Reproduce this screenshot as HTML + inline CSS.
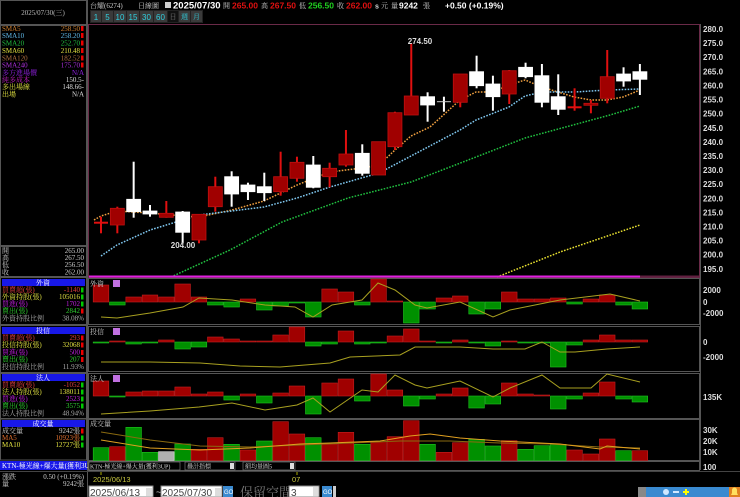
<!DOCTYPE html>
<html><head><meta charset="utf-8">
<style>
html,body{margin:0;padding:0;background:#000;width:740px;height:497px;overflow:hidden}
svg{display:block}
text{font-family:"Liberation Serif","Noto Serif CJK SC",serif;font-size:7px}
.s{font-family:"Liberation Sans","Noto Sans CJK SC",sans-serif}
.ax{font-family:"Liberation Sans",sans-serif;font-size:8px;font-weight:bold;fill:#ddd}
</style></head><body>
<svg id="c" width="740" height="497" viewBox="0 0 740 497" xmlns="http://www.w3.org/2000/svg">
<rect width="740" height="497" fill="#000"/>
<!-- left panel frames -->
<rect x="0.5" y="0.5" width="86" height="24" fill="#000" stroke="#555"/>
<text x="43" y="15" text-anchor="middle" fill="#bbb">2025/07/30(三)</text>
<rect x="0.5" y="25.5" width="86" height="220" fill="#000" stroke="#555"/>
<line x1="87.5" y1="0" x2="87.5" y2="497" stroke="#555"/>
<g>
<text x="2" y="31" fill="#d08030">SMA5</text><text x="80" y="31" text-anchor="end" fill="#d08030">258.50</text>
<text x="2" y="38" fill="#60b8e8">SMA10</text><text x="80" y="38" text-anchor="end" fill="#60b8e8">258.20</text>
<text x="2" y="45.5" fill="#20c040">SMA20</text><text x="80" y="45.5" text-anchor="end" fill="#20c040">252.70</text>
<text x="2" y="53" fill="#e0e040">SMA60</text><text x="80" y="53" text-anchor="end" fill="#e0e040">210.48</text>
<text x="2" y="60.5" fill="#b07040">SMA120</text><text x="80" y="60.5" text-anchor="end" fill="#b07040">182.52</text>
<text x="2" y="67.5" fill="#b030e0">SMA240</text><text x="80" y="67.5" text-anchor="end" fill="#b030e0">175.70</text>
<rect x="81" y="26" width="2.5" height="5" fill="#e00"/><rect x="81" y="33" width="2.5" height="5" fill="#e00"/><rect x="81" y="40.5" width="2.5" height="5" fill="#e00"/><rect x="81" y="48" width="2.5" height="5" fill="#e00"/><rect x="81" y="55.5" width="2.5" height="5" fill="#e00"/><rect x="81" y="62.5" width="2.5" height="5" fill="#e00"/>
<text x="2" y="75" fill="#9020e0">多方進場價</text><text x="84" y="75" text-anchor="end" fill="#9020e0">N/A</text>
<text x="2" y="82" fill="#c020c0">純多成本</text><text x="84" y="82" text-anchor="end" fill="#ddd">150.5-</text>
<text x="2" y="89" fill="#e0e040">多出場線</text><text x="84" y="89" text-anchor="end" fill="#ddd">148.66-</text>
<text x="2" y="96.5" fill="#e0e040">出場</text><text x="84" y="96.5" text-anchor="end" fill="#ddd">N/A</text>
</g>
<rect x="0.5" y="246.5" width="86" height="30" fill="#000" stroke="#555"/>
<text x="2" y="253" fill="#ccc">開</text><text x="84" y="253" text-anchor="end" fill="#ccc">265.00</text>
<text x="2" y="260" fill="#ccc">高</text><text x="84" y="260" text-anchor="end" fill="#ccc">267.50</text>
<text x="2" y="267" fill="#ccc">低</text><text x="84" y="267" text-anchor="end" fill="#ccc">256.50</text>
<text x="2" y="274.5" fill="#ccc">收</text><text x="84" y="274.5" text-anchor="end" fill="#ccc">262.00</text>
<!-- 外資 -->
<rect x="0.5" y="277.5" width="86" height="47" fill="#000" stroke="#555"/>
<rect x="2" y="279" width="83" height="7" fill="#1818e8"/><text x="43" y="285" text-anchor="middle" fill="#fff">外資</text>
<text x="2" y="292" fill="#e04040">買賣超(張)</text><text x="80" y="292" text-anchor="end" fill="#e04040">-1140</text><rect x="81" y="287.5" width="2.5" height="5" fill="#0c0"/>
<text x="2" y="299" fill="#e0e040">外資持股(張)</text><text x="80" y="299" text-anchor="end" fill="#e0e040">105016</text><rect x="81" y="294.5" width="2.5" height="5" fill="#0c0"/>
<text x="2" y="306" fill="#c020e0">買進(張)</text><text x="80" y="306" text-anchor="end" fill="#c020e0">1702</text><rect x="81" y="301.5" width="2.5" height="5" fill="#0c0"/>
<text x="2" y="313" fill="#30d030">賣出(張)</text><text x="80" y="313" text-anchor="end" fill="#30d030">2842</text><rect x="81" y="308.5" width="2.5" height="5" fill="#e00"/>
<text x="2" y="320.5" fill="#aaa">外資持股比例</text><text x="84" y="320.5" text-anchor="end" fill="#aaa">38.08%</text>
<!-- 投信 -->
<rect x="0.5" y="325.5" width="86" height="47" fill="#000" stroke="#555"/>
<rect x="2" y="327" width="83" height="7" fill="#1818e8"/><text x="43" y="333" text-anchor="middle" fill="#fff">投信</text>
<text x="2" y="340" fill="#e04040">買賣超(張)</text><text x="80" y="340" text-anchor="end" fill="#e04040">293</text><rect x="81" y="335.5" width="2.5" height="5" fill="#e00"/>
<text x="2" y="347" fill="#e0e040">投信持股(張)</text><text x="80" y="347" text-anchor="end" fill="#e0e040">32068</text><rect x="81" y="342.5" width="2.5" height="5" fill="#e00"/>
<text x="2" y="354.5" fill="#c020e0">買進(張)</text><text x="80" y="354.5" text-anchor="end" fill="#c020e0">500</text><rect x="81" y="350" width="2.5" height="5" fill="#e00"/>
<text x="2" y="361.5" fill="#30d030">賣出(張)</text><text x="80" y="361.5" text-anchor="end" fill="#30d030">207</text><rect x="81" y="357" width="2.5" height="5" fill="#e00"/>
<text x="2" y="369" fill="#aaa">投信持股比例</text><text x="84" y="369" text-anchor="end" fill="#aaa">11.93%</text>
<!-- 法人 -->
<rect x="0.5" y="373.5" width="86" height="45" fill="#000" stroke="#555"/>
<rect x="2" y="374" width="83" height="7" fill="#1818e8"/><text x="43" y="380" text-anchor="middle" fill="#fff">法人</text>
<text x="2" y="387" fill="#e04040">買賣超(張)</text><text x="80" y="387" text-anchor="end" fill="#e04040">-1052</text><rect x="81" y="382.5" width="2.5" height="5" fill="#0c0"/>
<text x="2" y="394" fill="#e0e040">法人持股(張)</text><text x="80" y="394" text-anchor="end" fill="#e0e040">138011</text><rect x="81" y="389.5" width="2.5" height="5" fill="#0c0"/>
<text x="2" y="401" fill="#c020e0">買進(張)</text><text x="80" y="401" text-anchor="end" fill="#c020e0">2523</text><rect x="81" y="396.5" width="2.5" height="5" fill="#0c0"/>
<text x="2" y="408" fill="#30d030">賣出(張)</text><text x="80" y="408" text-anchor="end" fill="#30d030">3575</text><rect x="81" y="403.5" width="2.5" height="5" fill="#0c0"/>
<text x="2" y="415.5" fill="#aaa">法人持股比例</text><text x="84" y="415.5" text-anchor="end" fill="#aaa">48.94%</text>
<!-- 成交量 -->
<rect x="0.5" y="419" width="86" height="41" fill="#000" stroke="#555"/>
<rect x="2" y="420" width="83" height="7" fill="#1818e8"/><text x="43" y="426" text-anchor="middle" fill="#fff">成交量</text>
<text x="2" y="433" fill="#ccc">成交量</text><text x="80" y="433" text-anchor="end" fill="#ccc">9242張</text><rect x="81" y="428.5" width="2.5" height="5" fill="#e00"/>
<text x="2" y="440" fill="#e07030">MA5</text><text x="80" y="440" text-anchor="end" fill="#e07030">10923張</text><rect x="81" y="435.5" width="2.5" height="5" fill="#0c0"/>
<text x="2" y="447" fill="#e0e040">MA10</text><text x="80" y="447" text-anchor="end" fill="#e0e040">12727張</text><rect x="81" y="442.5" width="2.5" height="5" fill="#0c0"/>
<rect x="0" y="461" width="87" height="9" fill="#1818e8"/><text x="2" y="468" fill="#fff">KTN-極光線+爆大量(獲利3UP)</text>
<text x="2" y="479" fill="#ccc">漲跌</text><text x="84" y="479" text-anchor="end" fill="#ccc">0.50 (+0.19%)</text>
<text x="2" y="486" fill="#ccc">量</text><text x="84" y="486" text-anchor="end" fill="#ccc">9242張</text>

<!-- top bar -->
<text x="90" y="8" fill="#ccc">台耀(6274)</text>
<text x="138" y="8" fill="#ccc">日線圖</text>
<rect x="165" y="2" width="6" height="6" fill="#ccc"/>
<text x="173" y="8.5" class="s" style="font-size:9.5px;font-weight:bold" fill="#fff">2025/07/30</text>
<text x="223" y="8" fill="#ccc">開</text><text x="232" y="8.5" class="s" style="font-size:8.5px;font-weight:bold" fill="#e01010">265.00</text>
<text x="261" y="8" fill="#ccc">高</text><text x="270" y="8.5" class="s" style="font-size:8.5px;font-weight:bold" fill="#e01010">267.50</text>
<text x="299" y="8" fill="#ccc">低</text><text x="308" y="8.5" class="s" style="font-size:8.5px;font-weight:bold" fill="#20d020">256.50</text>
<text x="337" y="8" fill="#ccc">收</text><text x="346" y="8.5" class="s" style="font-size:8.5px;font-weight:bold" fill="#e01010">262.00</text>
<text x="375" y="8.5" class="s" style="font-size:7px;font-weight:bold" fill="#ddd">s</text><text x="381" y="8" fill="#ccc">元</text>
<text x="391" y="8" fill="#ccc">量</text><text x="399" y="8.5" class="s" style="font-size:8.5px;font-weight:bold" fill="#fff">9242</text><text x="423" y="8" fill="#ccc">張</text>
<text x="445" y="8.5" class="s" style="font-size:8.5px;font-weight:bold" fill="#fff">+0.50 (+0.19%)</text>
<!-- buttons -->
<rect x="90" y="10" width="113" height="13" fill="#333"/>
<g class="s" style="font-size:8px" fill="#30d0e0">
<rect x="90.5" y="10.5" width="11" height="12" fill="#3a3a3a" stroke="#222"/><text x="96" y="20" text-anchor="middle" class="s" style="font-size:8px" fill="#30d0e0">1</text>
<rect x="101.5" y="10.5" width="12" height="12" fill="#3a3a3a" stroke="#222"/><text x="107.5" y="20" text-anchor="middle" class="s" style="font-size:8px" fill="#30d0e0">5</text>
<rect x="113.5" y="10.5" width="13" height="12" fill="#3a3a3a" stroke="#222"/><text x="120" y="20" text-anchor="middle" class="s" style="font-size:8px" fill="#30d0e0">10</text>
<rect x="126.5" y="10.5" width="13" height="12" fill="#3a3a3a" stroke="#222"/><text x="133" y="20" text-anchor="middle" class="s" style="font-size:8px" fill="#30d0e0">15</text>
<rect x="139.5" y="10.5" width="14" height="12" fill="#3a3a3a" stroke="#222"/><text x="146.5" y="20" text-anchor="middle" class="s" style="font-size:8px" fill="#30d0e0">30</text>
<rect x="153.5" y="10.5" width="14" height="12" fill="#3a3a3a" stroke="#222"/><text x="160.5" y="20" text-anchor="middle" class="s" style="font-size:8px" fill="#30d0e0">60</text>
<rect x="167.5" y="10.5" width="11" height="12" fill="#111" stroke="#222"/><text x="173" y="19" text-anchor="middle" fill="#777">日</text>
<rect x="178.5" y="10.5" width="12" height="12" fill="#3a3a3a" stroke="#222"/><text x="184.5" y="19" text-anchor="middle" fill="#30d0e0">週</text>
<rect x="190.5" y="10.5" width="12" height="12" fill="#3a3a3a" stroke="#222"/><text x="196.5" y="19" text-anchor="middle" fill="#30d0e0">月</text>
</g>

<!-- main chart frame -->
<rect x="88.5" y="24.5" width="611" height="253" fill="none" stroke="#6a2a48"/>
<line x1="700.5" y1="24" x2="700.5" y2="470" stroke="#555"/>
<g class="ax">
<text x="703" y="32" class="ax">280.0</text><text x="703" y="46" class="ax">275.0</text><text x="703" y="60" class="ax">270.0</text><text x="703" y="74.5" class="ax">265.0</text><text x="703" y="88.5" class="ax">260.0</text><text x="703" y="102.5" class="ax">255.0</text><text x="703" y="116.5" class="ax">250.0</text><text x="703" y="131" class="ax">245.0</text><text x="703" y="145" class="ax">240.0</text><text x="703" y="159" class="ax">235.0</text><text x="703" y="173" class="ax">230.0</text><text x="703" y="187" class="ax">225.0</text><text x="703" y="201.5" class="ax">220.0</text><text x="703" y="215.5" class="ax">215.0</text><text x="703" y="229.5" class="ax">210.0</text><text x="703" y="243.5" class="ax">205.0</text><text x="703" y="257.5" class="ax">200.0</text><text x="703" y="272" class="ax">195.0</text>
<text x="703" y="293" class="ax">2000</text><text x="703" y="305" class="ax">0</text><text x="703" y="316" class="ax">-2000</text>
<text x="703" y="345" class="ax">0</text><text x="703" y="360" class="ax">-2000</text>
<text x="703" y="400" class="ax">135K</text>
<text x="703" y="433" class="ax">30K</text><text x="703" y="444" class="ax">20K</text><text x="703" y="455" class="ax">10K</text>
<text x="703" y="470" class="ax">100</text>
</g>
<g fill="none" stroke-width="1.5" stroke-dasharray="1.6 1.4">
<polyline stroke="#f0a040" points="94,220 101,216 117,211 150,213 183,216 199,217 232,210 264,201 297,185 330,172 362,168 379,165 395,150 411,136 430,127 460,100 476,92 493,92 509,85 525,80 542,87 558,92 574,97 591,100 607,100 623,97 640,90"/>
<polyline stroke="#80c8f0" points="101,256 117,245 150,230 199,215 264,207 297,198 330,187 379,173 411,156 460,130 476,120 509,107 525,96 542,92 575,92 607,90 640,89"/>
<polyline stroke="#20c040" points="171,277 230,250 282,222 348,198 411,182 476,157 525,138 610,115 640,106"/>
<polyline stroke="#e8e030" points="497,277 560,252 640,225"/>
</g>
<line x1="89" y1="276.5" x2="640" y2="276.5" stroke="#e020e0" stroke-width="2"/>
<line x1="640" y1="276.5" x2="699" y2="276.5" stroke="#602040" stroke-width="2"/>
<g id="cand"></g>
<text x="183" y="248" text-anchor="middle" class="s" style="font-size:8px;font-weight:bold" fill="#ddd">204.00</text>
<text x="420" y="44" text-anchor="middle" class="s" style="font-size:8px;font-weight:bold" fill="#ddd">274.50</text>

<!-- sub panels -->
<rect x="88.5" y="278.5" width="611" height="46" fill="none" stroke="#555"/>
<rect x="88.5" y="326.5" width="611" height="45" fill="none" stroke="#555"/>
<rect x="88.5" y="373.5" width="611" height="45" fill="none" stroke="#555"/>
<rect x="88.5" y="419.5" width="611" height="41" fill="none" stroke="#555"/>
<rect x="88.5" y="461.5" width="611" height="9" fill="none" stroke="#555"/>
<g id="bars"></g>
<g fill="none" stroke-width="1">
<polyline stroke="#a8a020" points="101,317 117,318 150,313 183,307 199,298 232,300 265,305 295,307 313,317 332,305 362,300 378,283 395,290 415,305 427,308 460,302 493,317 510,310 560,300 610,294 640,301"/>
<polyline stroke="#a8a020" points="101,362 150,362 200,363 240,366 280,367 330,363 350,357 400,355 415,347 460,347 493,349 525,349 542,342 560,352 575,352 607,349 640,347"/>
<polyline stroke="#a8a020" points="101,414 150,411 199,407 232,403 265,410 297,405 313,398 330,412 362,390 378,392 395,375 415,385 427,388 460,381 493,397 510,388 542,375 560,388 591,388 607,374 640,382"/>
<polyline stroke="#8a6a10" points="101,432 150,440 200,446 250,447 300,445 350,443 400,441 450,441 500,443 550,444 600,447 640,448"/>
<polyline stroke="#e0a020" points="101,440 150,448 200,450 250,448 300,444 330,443 380,441 410,436 430,434 460,438 500,441 560,444 600,449 607,446 640,449"/>
</g>
<g class="s" style="font-size:6px">
<text x="90" y="286" fill="#ccc">外資</text><rect x="113" y="280" width="7" height="7" fill="#c070e0"/>
<text x="90" y="334" fill="#ccc">投信</text><rect x="113" y="328" width="7" height="7" fill="#c070e0"/>
<text x="90" y="381" fill="#ccc">法人</text><rect x="113" y="375" width="7" height="7" fill="#c070e0"/>
<text x="90" y="426" fill="#ccc">成交量</text>
</g>
<!-- bottom row -->
<rect x="89" y="462" width="91" height="8" fill="#000" stroke="#888" stroke-width="0.6"/>
<text x="90" y="468.5" style="font-size:6px" fill="#ddd">KTN-極光線+爆大量(獲利3UP)</text>
<rect x="185" y="462" width="50" height="8" fill="#000" stroke="#888" stroke-width="0.6"/><text x="187" y="468.5" style="font-size:6px" fill="#ddd">疊計指標</text><rect x="230" y="463" width="4" height="6" fill="#ddd"/>
<rect x="243" y="462" width="52" height="8" fill="#000" stroke="#888" stroke-width="0.6"/><text x="245" y="468.5" style="font-size:6px" fill="#ddd">細均量圖5</text><rect x="290" y="463" width="4" height="6" fill="#ddd"/>
<line x1="101" y1="471" x2="101" y2="475" stroke="#aa0"/><line x1="297" y1="471" x2="297" y2="475" stroke="#aa0"/>
<text x="93" y="482" class="s" style="font-size:7.5px" fill="#c8c840">2025/06/13</text>
<text x="292" y="482" class="s" style="font-size:7.5px" fill="#c8c840">07</text>
<rect x="89" y="486" width="64" height="11" fill="#fff" stroke="#888"/><text x="90" y="496" class="s" style="font-size:10px" fill="#444">2025/06/13</text><rect x="146" y="488" width="6" height="8" fill="#ddd"/>
<text x="156" y="495" class="s" style="font-size:9px" fill="#ccc">~</text>
<rect x="161" y="486" width="61" height="11" fill="#fff" stroke="#888"/><text x="162" y="496" class="s" style="font-size:10px" fill="#444">2025/07/30</text><rect x="215" y="488" width="6" height="8" fill="#ddd"/>
<rect x="223" y="486" width="10" height="11" fill="#3a8ad0"/><text x="224" y="494" class="s" style="font-size:6px" fill="#fff">GO</text>
<text x="240" y="497" style="font-size:13px" fill="#777">保留空間</text>
<rect x="289" y="486" width="30" height="11" fill="#fff" stroke="#888"/><text x="291" y="496" class="s" style="font-size:10px" fill="#444">3</text><rect x="313" y="487" width="5" height="9" fill="#ddd"/>
<rect x="322" y="486" width="10" height="11" fill="#3a8ad0"/><text x="323" y="494" class="s" style="font-size:6px" fill="#fff">GO</text>
<rect x="333" y="486" width="3" height="11" fill="#ccc"/>
<line x1="0" y1="471.5" x2="740" y2="471.5" stroke="#444"/>
<!-- toolbar icons -->
<rect x="638" y="487" width="8" height="10" fill="#888"/>
<rect x="646" y="487" width="94" height="10" fill="#3a8ad0"/>
<g fill="#cfe8ff"><circle cx="666" cy="492" r="3"/><rect x="673" y="491" width="6" height="2"/><rect x="685" y="489" width="2" height="6" fill="#ff0"/><rect x="683" y="491" width="6" height="2" fill="#ff0"/></g>
<rect x="729" y="487" width="11" height="10" fill="#e08020"/><path d="M731 495h7l-1-2v-3a2.5 2.5 0 0 0-5 0v3z" fill="#ffe060"/>
</svg>
<script>
const NS="http://www.w3.org/2000/svg";
function el(p,t,a){const e=document.createElementNS(NS,t);for(const k in a)e.setAttribute(k,a[k]);p.appendChild(e);return e;}
const X=i=>101+i*16.33;
const C=[['rd',222.7,222.7,216.7,233.3],['r',208.3,225,206.7,233.3],['w',199.3,211.7,161.7,217.7],['w',211,214,205,216.7],['r',213.3,217.3,201,217.7],['w',212,232.3,211,243.3],['r',214.3,240,214,243.3],['r',186.7,206.7,176.7,211.7],['w',176.7,194,171.3,206.7],['w',185,191.7,182.7,200],['w',186.7,192.7,172.7,201],['r',176.7,191.7,151.7,195.7],['r',162.3,178.3,156.7,181.7],['w',165,187.3,156,188.3],['r',168.3,176.7,162.7,187.3],['r',154,165,130,166.7],['w',153.3,173.3,144.3,175.7],['r',141.7,175,141.7,175],['r',112.7,146.7,111.7,150],['r',96,115,43.3,115],['w',96.7,105,92.3,121.7],['wd',101.7,101.7,96.7,111.7],['r',74,102.3,74,107.3],['w',71.7,85.7,55.7,88.3],['w',84,96.7,75.7,110.7],['r',70.7,94,70,104],['w',67.3,76.7,62.7,78.3],['w',75.7,102.3,64,107.3],['w',96.7,109.3,74.3,115],['rd',107.3,107.3,88.3,110.7],['r',103.3,105.3,100,113.3],['r',76.7,98.3,50,103.3],['w',74,81,67.3,86.7],['w',71.7,79.3,64,95]];
const g=document.getElementById('cand');
C.forEach((c,i)=>{const x=X(i);const red=c[0][0]=='r';const wc=red?'#e01010':'#fff';
el(g,'line',{x1:x,x2:x,y1:c[3],y2:c[4],stroke:wc,'stroke-width':2});
if(c[0].length==2){el(g,'line',{x1:x-7,x2:x+7,y1:c[1],y2:c[1],stroke:red?'#e01010':'#ccc','stroke-width':red?2:1});}
else el(g,'rect',{x:x-7,y:c[1],width:14,height:Math.max(2,c[2]-c[1]),fill:red?'#a00000':'#fff',stroke:red?'#c01010':'#fff','stroke-width':0.8});});
const b=document.getElementById('bars');
function bars(z,a){a.forEach((h,i)=>{const x=X(i)-7.8;const up=h>0;const H=Math.abs(h);
el(b,'rect',{x:x,y:up?z-H:z,width:15.6,height:Math.max(1,H),fill:up?'#a00000':'#009000',stroke:up?'#c02020':'#20c020','stroke-width':0.6});});}
bars(302,[17,-3,5,7,5,18,5,-3,-5,3,-8,-4,-1,-15,13,10,-3,23,1,-21,-7,4,6,-12,-7,10,3,3,4,-2,3,7,-3,-7]);
bars(342,[-1,1,-2,-1,2,-7,-5,5,3,1,1,7,15,-4,-2,11,-2,-1,6,13,1,-1,2,-1,-4,1,-1,-1,-25,-3,2,7,2,2]);
bars(396,[15,-1,4,5,5,9,2,4,-4,2,-7,3,10,-18,13,17,-5,22,6,-10,-3,2,8,-12,-8,13,2,1,-13,-3,3,14,-3,-6]);
const VT=[447.7,446.7,427.3,452.3,451.7,444,449.3,437.7,444.3,450,441,421.7,434,437.7,444,432.3,444.3,441.7,436.7,420.7,444.3,452.3,442.7,439.3,446,440.7,449.3,445.7,444.3,450,454,439,450.7,450.7];
const VC="grrggg rrrgrrrgrrgrrrgrrggrgggrrrgr".replace(/ /,'') ;
const cols=['g','r','g','g','x','g','r','r','g','r','g','r','r','g','r','r','g','r','r','r','g','r','r','g','g','r','g','g','g','r','r','r','g','r'];
VT.forEach((t,i)=>{const c=cols[i];const x=X(i)-7.8;
el(b,'rect',{x:x,y:t,width:15.6,height:460.5-t,fill:c=='r'?'#a00000':c=='g'?'#009000':'#b0b0b0',stroke:c=='r'?'#c02020':c=='g'?'#20c020':'#ddd','stroke-width':0.6});});
</script>
</body></html>
